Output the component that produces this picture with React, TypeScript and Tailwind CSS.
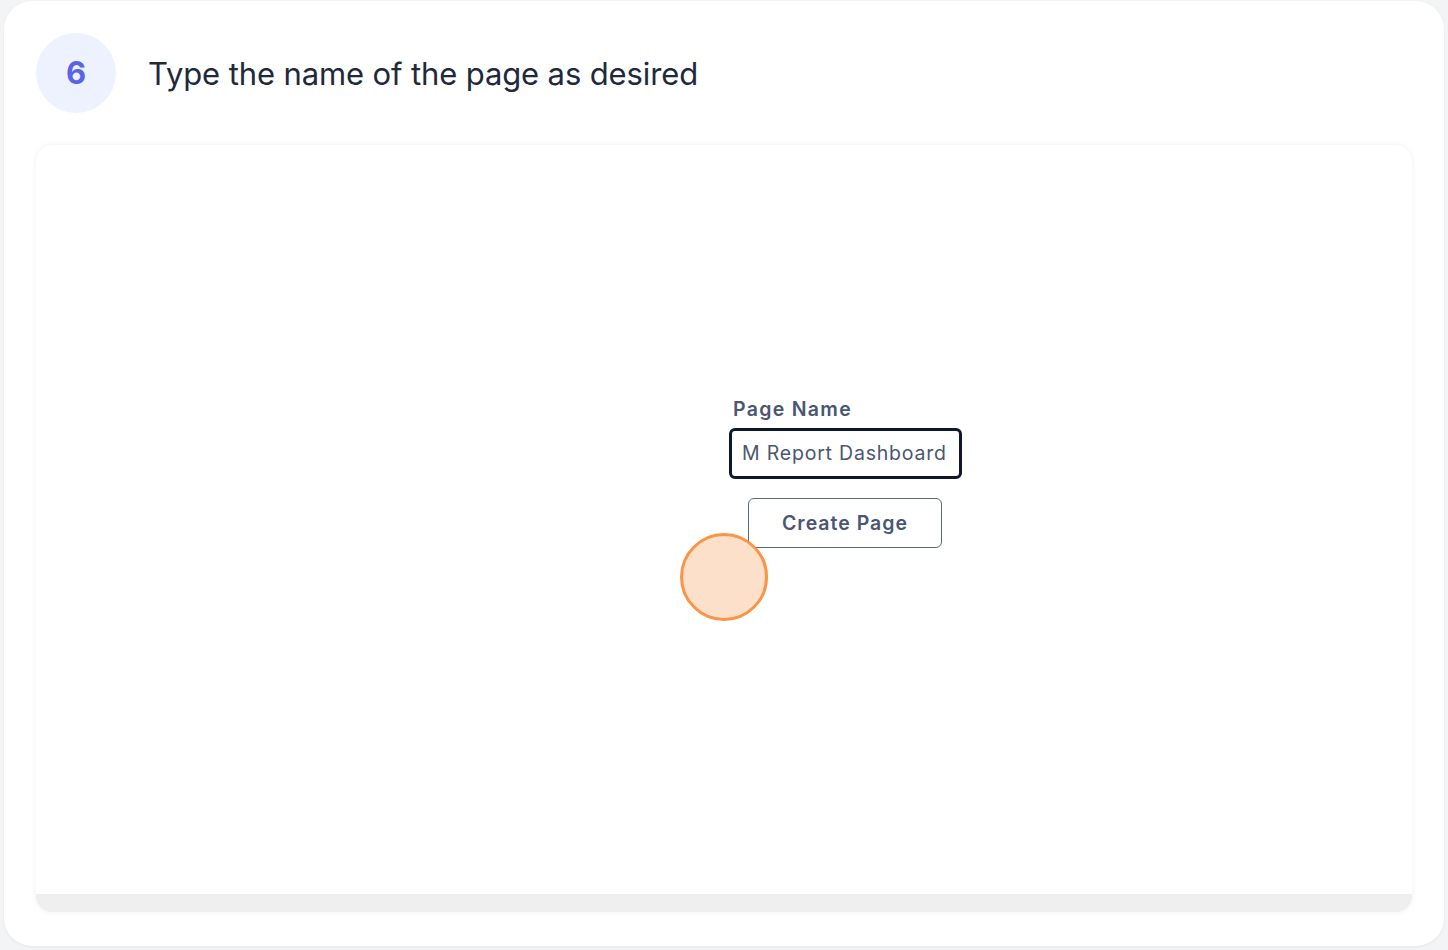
export default function App() {
  return (
    <div className="min-h-screen bg-[#f3f4f6] pl-1 pt-px" style={{ fontFamily: 'Inter, "Liberation Sans", sans-serif' }}>
      <div className="flex h-[945px] w-[1440px] flex-col gap-8 rounded-[28px] bg-white px-8 pt-8 shadow-[0_1px_3px_rgba(0,0,0,0.06)]">
        {/* Step header */}
        <div className="flex items-center gap-8">
          <div className="flex h-20 w-20 shrink-0 items-center justify-center rounded-full bg-[#eef2ff]">
            <span className="text-[31px] font-bold text-[#5b63e6]">6</span>
          </div>
          <h1 className="pt-[3px] text-[31px] font-normal tracking-[-0.12px] text-[#1e293b]">Type the name of the page as desired</h1>
        </div>

        {/* Screenshot panel */}
        <div className="relative flex h-[767px] flex-col overflow-hidden rounded-2xl bg-white shadow-[0_0_6px_rgba(0,0,0,0.06)]">
          <div className="flex-1 pl-[693px] pt-[250px]" style={{ fontFamily: 'Inter, "Open Sans", sans-serif' }}>
            <div className="flex w-[233px] flex-col">
              <label className="pl-1 text-[19.5px] font-semibold tracking-[1.3px] text-[#4a5672]">Page Name</label>
              <div className="mt-[4px] flex h-[51px] items-center rounded-md border-[3px] border-[#0f172a] px-[10px]">
                <span className="whitespace-nowrap text-[19.5px] tracking-[0.8px] text-[#4a5672]">M Report Dashboard</span>
              </div>
              <button className="ml-[19px] mt-[19px] flex h-[50px] w-[194px] items-center justify-center rounded-md border border-[#5c6780] bg-white text-[19.5px] font-semibold tracking-[1px] text-[#4a5672]">
                Create Page
              </button>
            </div>
          </div>
          <div className="h-[18px] bg-[#efefef]" />

          {/* click indicator */}
          <div className="absolute left-[644px] top-[388px] h-[88px] w-[88px] rounded-full border-[3px] border-[#fb9445] bg-[#fde0ca]" />
        </div>
      </div>
    </div>
  );
}
